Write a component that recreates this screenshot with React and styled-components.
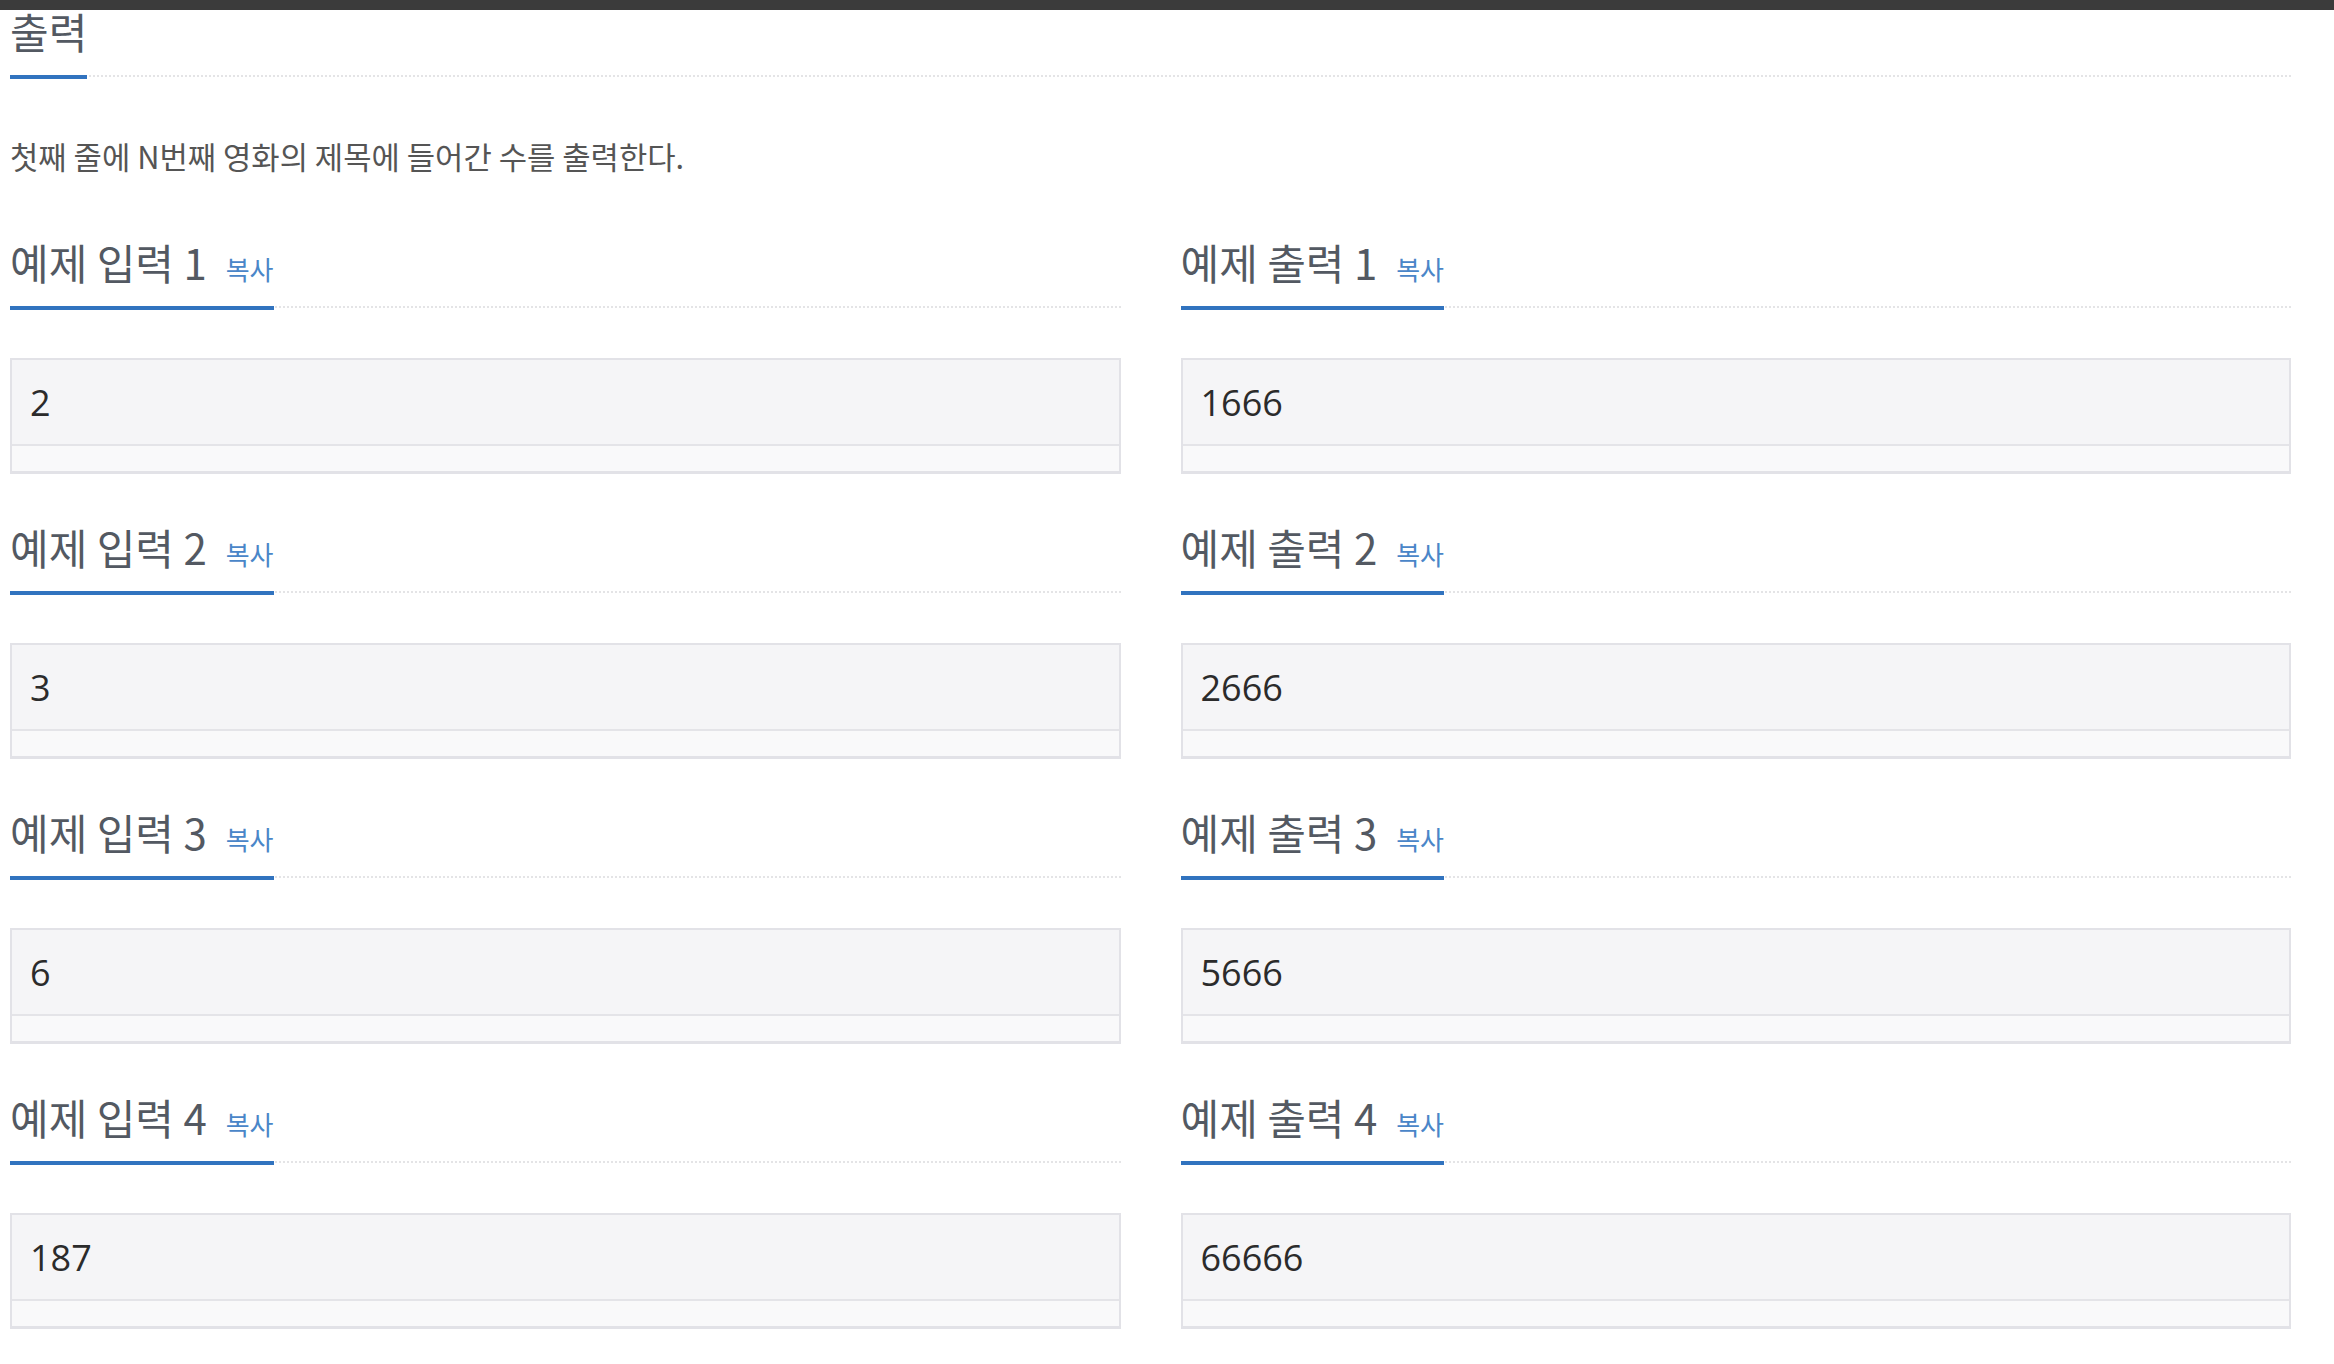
import React from "react";
import styled, { createGlobalStyle } from "styled-components";

const GlobalStyle = createGlobalStyle`
  html, body {
    margin: 0;
    padding: 0;
    background: #ffffff;
  }
  body {
    font-family: "Noto Sans CJK KR", "Noto Sans", sans-serif;
    color: #555;
  }
`;

const TopBar = styled.div`
  height: 10px;
  background: #3b3b3b;
`;

const Page = styled.main`
  padding: 0 43px 40px 10px;
`;

const Headline = styled.div`
  display: flex;
  align-items: flex-end;
  border-bottom: 2px dotted #e4e4e6;
  margin-bottom: ${(p) => (p.$tight ? "0" : "50px")};
`;

const Title = styled.h2`
  margin: 0 0 -4px 0;
  padding: 0 0 23px 0;
  font-size: 42px;
  line-height: 42px;
  font-weight: 400;
  color: #535962;
  border-bottom: 4px solid #3173bf;
  white-space: nowrap;
`;

const CopyButton = styled.button`
  margin: 0 0 0 19px;
  padding: 0;
  border: 0;
  background: none;
  font-family: "Noto Sans CJK KR", "Noto Sans", sans-serif;
  font-size: 26px;
  line-height: 1;
  color: #4a86c8;
  cursor: pointer;
`;

const Description = styled.p`
  margin: 58px 0 64px;
  font-size: 30.8px;
  line-height: 42px;
  color: #555;
`;

const SampleGrid = styled.div`
  display: grid;
  grid-template-columns: 1fr 1fr;
  column-gap: 60px;
  row-gap: 52px;
`;

const Sample = styled.section`
  display: flex;
  flex-direction: column;
`;

const SampleBox = styled.div`
  border: 2px solid #e2e2e7;
  border-bottom-width: 3px;
  background: #f5f5f7;
`;

const SampleData = styled.pre`
  margin: 0;
  height: 84px;
  padding: 0 18px;
  display: flex;
  align-items: center;
  font-family: "Open Sans", "Noto Sans", sans-serif;
  font-size: 36px;
  color: #2b2b2b;
`;

const ScrollStrip = styled.div`
  height: 25px;
  border-top: 2px solid #e4e4e8;
  background: #f9f9fa;
`;

const samples = [
  { input: "2", output: "1666" },
  { input: "3", output: "2666" },
  { input: "6", output: "5666" },
  { input: "187", output: "66666" },
];

function SampleCell({ title, data }) {
  return (
    <Sample>
      <Headline>
        <Title>
          {title}
          <CopyButton type="button">복사</CopyButton>
        </Title>
      </Headline>
      <SampleBox>
        <SampleData>{data}</SampleData>
        <ScrollStrip />
      </SampleBox>
    </Sample>
  );
}

export default function App() {
  return (
    <>
      <GlobalStyle />
      <TopBar />
      <Page>
        <Headline $tight>
          <Title>출력</Title>
        </Headline>
        <Description>첫째 줄에 N번째 영화의 제목에 들어간 수를 출력한다.</Description>
        <SampleGrid>
          {samples.map((s, i) => (
            <React.Fragment key={i}>
              <SampleCell title={`예제 입력 ${i + 1}`} data={s.input} />
              <SampleCell title={`예제 출력 ${i + 1}`} data={s.output} />
            </React.Fragment>
          ))}
        </SampleGrid>
      </Page>
    </>
  );
}
